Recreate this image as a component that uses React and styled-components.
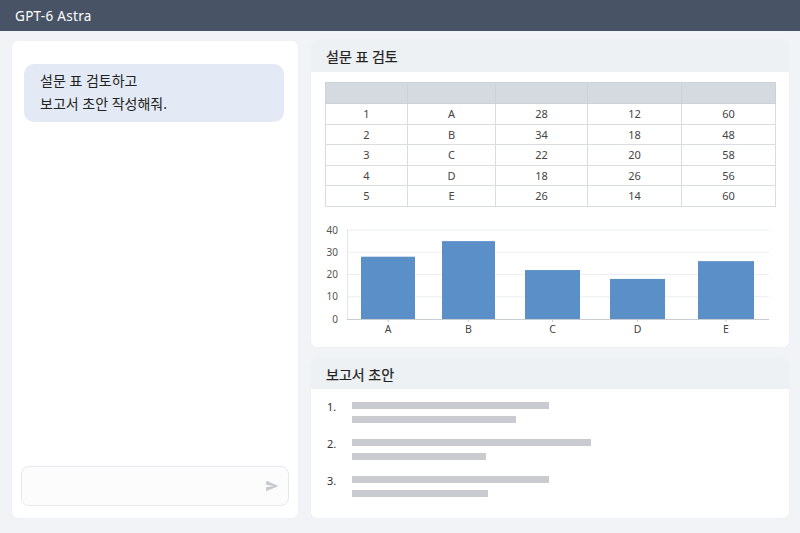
import React from 'react'
import styled, { createGlobalStyle } from 'styled-components'

const GlobalStyle = createGlobalStyle`
body{
  margin:0;
  background:#f1f3f6;
  font-family:"Noto Sans","Noto Sans CJK KR",sans-serif;
}
`

const Page = styled.div`
width:800px;
height:533px;
display:flex;
flex-direction:column;
background:#f1f3f6;
`
const Header = styled.div`
height:31px;
flex-shrink:0;
background:#485466;
color:#fff;
display:flex;
align-items:center;
padding-left:15px;
font-size:13.5px;
letter-spacing:0.3px;
`
const Main = styled.div`
flex:1;
display:flex;
gap:13px;
padding:10px 12px 15px 12px;
min-height:0;
`
const ChatPanel = styled.div`
width:286px;
flex-shrink:0;
background:#fff;
border-radius:6px;
display:flex;
flex-direction:column;
justify-content:space-between;
padding:23px 9px 12px 9px;
box-sizing:border-box;
box-shadow:0 0 2px rgba(0,0,0,0.04);
`
const Bubble = styled.div`
margin:0 5px 0 3px;
background:#e3eaf5;
border-radius:10px;
padding:5px 16px 7px 16px;
font-size:14px;
line-height:23px;
color:#222;
`
const InputBox = styled.div`
height:40px;
border:1px solid #e6e8eb;
border-radius:8px;
background:#fcfcfd;
display:flex;
align-items:center;
justify-content:flex-end;
padding-right:9px;
box-sizing:border-box;
`
const RightCol = styled.div`
flex:1;
display:flex;
flex-direction:column;
gap:11px;
margin-top:-1px;
`
const Card = styled.div`
background:#fff;
border-radius:6px;
overflow:hidden;
height:${p => p.h}px;
flex-shrink:0;
box-shadow:0 0 2px rgba(0,0,0,0.04);
`
const CardHead = styled.div`
height:${p => p.h}px;
background:#eef1f4;
display:flex;
align-items:center;
padding-left:15px;
font-size:14px;
font-weight:400;
-webkit-text-stroke:0.25px #222;
color:#222;
`
const TableWrap = styled.div`
padding:10px 13px 0 14px;
`
const Table = styled.table`
width:450px;
border-collapse:collapse;
font-size:11px;
color:#444;
table-layout:fixed;
`
const Th = styled.th`
height:20px;
background:#d5dae0;
border:1px solid #cdd2d8;
padding:0;
`
const Td = styled.td`
height:19.5px;
border:1px solid #d9dce0;
text-align:center;
padding:0;
line-height:13px;
`
const ChartWrap = styled.div`
padding:15px 0 0 14px;
`
const List = styled.div`
padding:11px 0 0 16px;
display:flex;
flex-direction:column;
gap:14px;
`
const Item = styled.div`
display:flex;
`
const Num = styled.div`
width:25px;
font-size:11px;
color:#333;
line-height:12px;
padding-top:1px;
`
const Lines = styled.div`
display:flex;
flex-direction:column;
gap:7px;
padding-top:2px;
`
const Line = styled.div`
height:7px;
background:#c9cbd0;
width:${p => p.w}px;
`

const rows = [
  [1, 'A', 28, 12, 60],
  [2, 'B', 34, 18, 48],
  [3, 'C', 22, 20, 58],
  [4, 'D', 18, 26, 56],
  [5, 'E', 26, 14, 60],
]
const colW = [82, 88, 92, 94, 94]

const bars = [
  { l: 'A', x: 36, w: 54, v: 28 },
  { l: 'B', x: 117, w: 53, v: 35 },
  { l: 'C', x: 200, w: 55, v: 22 },
  { l: 'D', x: 285, w: 55, v: 18 },
  { l: 'E', x: 373, w: 56, v: 26 },
]

const Chart = () => {
  const top = 8, zero = 97
  const y = v => zero - (v / 40) * (zero - top)
  return (
    <svg width="450" height="116" style={{ display: 'block' }}>
      {[0, 10, 20, 30, 40].map(t => (
        <g key={t}>
          {t > 0 && <line x1="22" x2="444" y1={y(t)} y2={y(t)} stroke="#eceef1" strokeWidth="1" />}
          <text x="13" y={y(t) + 3.5} textAnchor="end" fontSize="10" fill="#555" fontFamily="Noto Sans, sans-serif">{t}</text>
        </g>
      ))}
      <line x1="22.5" x2="22.5" y1={top} y2={zero} stroke="#e3e5e8" />
      {bars.map(b => (
        <g key={b.l}>
          <rect x={b.x} y={y(b.v)} width={b.w} height={zero - y(b.v)} fill="#5b8fc7" />
          <line x1={b.x + b.w / 2} x2={b.x + b.w / 2} y1={zero} y2={zero + 3} stroke="#c9ccd1" />
          <text x={b.x + b.w / 2} y="111" textAnchor="middle" fontSize="10.5" fill="#444" fontFamily="Noto Sans, sans-serif">{b.l}</text>
        </g>
      ))}
      <line x1="22" x2="444" y1={zero + 0.5} y2={zero + 0.5} stroke="#c9ccd1" />
    </svg>
  )
}

const SendIcon = () => (
  <svg width="14" height="14" viewBox="0 0 24 24">
    <path d="M2 21 L23 12 L2 3 L2 10 L16 12 L2 14 Z" fill="#c4c7cc" />
  </svg>
)

const draft = [
  [197, 164],
  [239, 134],
  [197, 136],
]

const App = () => {
  return (
    <Page>
      <GlobalStyle />
      <Header>GPT-6 Astra</Header>
      <Main>
        <ChatPanel>
          <Bubble>
            설문 표 검토하고<br />
            보고서 초안 작성해줘.
          </Bubble>
          <InputBox>
            <SendIcon />
          </InputBox>
        </ChatPanel>
        <RightCol>
          <Card h={307}>
            <CardHead h={32}>설문 표 검토</CardHead>
            <TableWrap>
              <Table>
                <colgroup>
                  {colW.map((w, i) => <col key={i} style={{ width: w }} />)}
                </colgroup>
                <thead>
                  <tr>
                    {colW.map((_, i) => <Th key={i} />)}
                  </tr>
                </thead>
                <tbody>
                  {rows.map(r => (
                    <tr key={r[0]}>
                      {r.map((c, i) => <Td key={i}>{c}</Td>)}
                    </tr>
                  ))}
                </tbody>
              </Table>
            </TableWrap>
            <ChartWrap>
              <Chart />
            </ChartWrap>
          </Card>
          <Card h={160}>
            <CardHead h={31}>보고서 초안</CardHead>
            <List>
              {draft.map((d, i) => (
                <Item key={i}>
                  <Num>{i + 1}.</Num>
                  <Lines>
                    <Line w={d[0]} />
                    <Line w={d[1]} />
                  </Lines>
                </Item>
              ))}
            </List>
          </Card>
        </RightCol>
      </Main>
    </Page>
  )
}

export default App
